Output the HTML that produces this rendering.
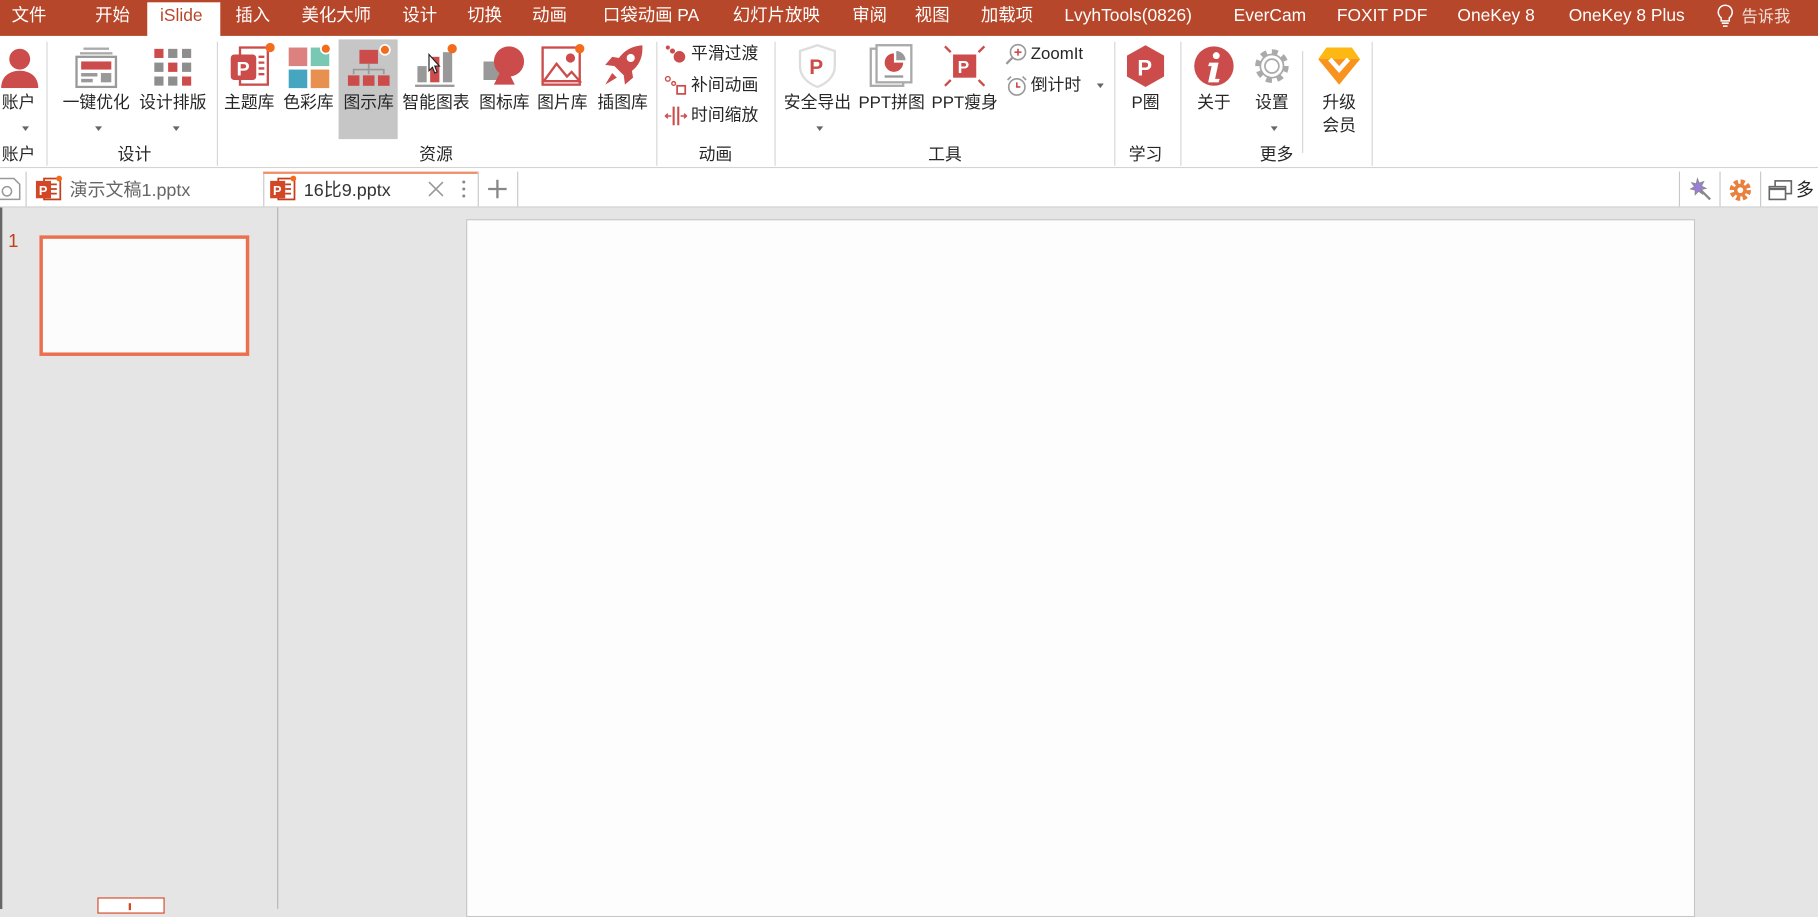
<!DOCTYPE html>
<html><head><meta charset="utf-8"><style>
html,body{margin:0;padding:0;width:1818px;height:909px;overflow:hidden;background:#e5e5e5}
#w{position:absolute;left:0;top:0;width:1568px;height:784px;transform:scale(1.15944,1.15944);transform-origin:0 0;font-family:"Liberation Sans","Noto Sans CJK SC",sans-serif;color:#262626}
.a{position:absolute}
.tab{position:absolute;top:4px;color:#fff;font-size:15px;line-height:20px;white-space:nowrap}
.lbl{position:absolute;font-size:14.5px;line-height:18px;white-space:nowrap;transform:translateX(-50%);text-align:center}
.sep{position:absolute;top:36px;height:107px;width:1px;background:#d6d6d6}
.arr{position:absolute;width:0;height:0;border-left:3.5px solid transparent;border-right:3.5px solid transparent;border-top:4px solid #666;transform:translateX(-50%)}
.sm{position:absolute;font-size:14.5px;line-height:18px;white-space:nowrap}
.vl{position:absolute;width:1px;background:#c8c8c8}
</style></head><body><div id="w">
<div class="a" style="left:0;top:0;width:1568px;height:31px;background:#b7472a"></div>
<div class="a" style="left:127px;top:2px;width:63px;height:30px;background:#fff"></div>
<div class="tab" style="left:10px">文件</div>
<div class="tab" style="left:82px">开始</div>
<div class="tab" style="left:138px;color:#b7472a">iSlide</div>
<div class="tab" style="left:203px">插入</div>
<div class="tab" style="left:260px">美化大师</div>
<div class="tab" style="left:347px">设计</div>
<div class="tab" style="left:403px">切换</div>
<div class="tab" style="left:459px">动画</div>
<div class="tab" style="left:520px">口袋动画 PA</div>
<div class="tab" style="left:632px">幻灯片放映</div>
<div class="tab" style="left:735px">审阅</div>
<div class="tab" style="left:789px">视图</div>
<div class="tab" style="left:846px">加载项</div>
<div class="tab" style="left:918px">LvyhTools(0826)</div>
<div class="tab" style="left:1064px">EverCam</div>
<div class="tab" style="left:1153px">FOXIT PDF</div>
<div class="tab" style="left:1257px">OneKey 8</div>
<div class="tab" style="left:1353px">OneKey 8 Plus</div>
<svg class="a" style="left:1479px;top:3px" width="18" height="22" viewBox="0 0 18 22"><path d="M9 1.5a6 6 0 0 0-3.5 10.9V15h7v-2.6A6 6 0 0 0 9 1.5z" fill="none" stroke="#fff" stroke-width="1.3"/><path d="M6 17h6M7 19.5h4" stroke="#fff" stroke-width="1.3"/></svg>
<div class="tab" style="left:1502px;font-size:14px;color:#f1e0da">告诉我</div>

<div class="a" style="left:0;top:31px;width:1568px;height:113px;background:#fff;border-bottom:1px solid #d4d4d4"></div>
<div class="a" style="left:292px;top:34px;width:51px;height:86px;background:#c6c6c6"></div>

<svg class="a" style="left:0;top:40px" width="34" height="36" viewBox="0 0 34 36"><circle cx="17" cy="11" r="9" fill="#cc4b4b"/><path d="M1 36c0-10 7-15 16-15s16 5 16 15z" fill="#cc4b4b"/></svg>
<div class="lbl" style="left:16px;top:80px">账户</div><div class="arr" style="left:22px;top:109px"></div>
<div class="lbl" style="left:16px;top:125px">账户</div>
<div class="sep" style="left:40px"></div>
<svg class="a" style="left:64px;top:40px" width="38" height="36" viewBox="0 0 38 36"><rect x="8" y="1" width="22" height="2" fill="#aaa"/><rect x="5" y="5" width="28" height="2" fill="#aaa"/><rect x="2" y="9" width="34" height="26" fill="#fff" stroke="#999" stroke-width="2"/><rect x="6" y="13" width="26" height="7" fill="#cc4b4b"/><rect x="6" y="23" width="14" height="3" fill="#999"/><rect x="6" y="28" width="10" height="3" fill="#999"/><rect x="23" y="23" width="9" height="8" fill="#999"/></svg>
<div class="lbl" style="left:83px;top:80px">一键优化</div><div class="arr" style="left:85px;top:109px"></div>
<svg class="a" style="left:133px;top:42px" width="32" height="32" viewBox="0 0 32 32"><g fill="#8e8e8e"><rect x="0" y="0" width="8" height="8" fill="#cc4b4b"/><rect x="12" y="0" width="8" height="8"/><rect x="24" y="0" width="8" height="8"/><rect x="0" y="12" width="8" height="8"/><rect x="12" y="12" width="8" height="8" fill="#cc4b4b"/><rect x="24" y="12" width="8" height="8"/><rect x="0" y="24" width="8" height="8"/><rect x="12" y="24" width="8" height="8"/><rect x="24" y="24" width="8" height="8" fill="#cc4b4b"/></g></svg>
<div class="lbl" style="left:149px;top:80px">设计排版</div><div class="arr" style="left:152px;top:109px"></div>
<div class="lbl" style="left:116px;top:125px">设计</div>
<div class="sep" style="left:187px"></div>
<svg class="a" style="left:197px;top:37px" width="40" height="40" viewBox="0 0 40 40"><rect x="10" y="4" width="24" height="32" fill="#fff" stroke="#cc4b4b" stroke-width="2"/><path d="M26 12h5M26 17h5M26 22h5M26 27h5" stroke="#cc4b4b" stroke-width="2"/><rect x="2" y="10" width="22" height="22" rx="3" fill="#cc4b4b"/><text x="7" y="28" font-size="17" font-weight="bold" fill="#fff" font-family="Liberation Sans">P</text><circle cx="36" cy="4" r="4" fill="#f36b1c"/></svg>
<div class="lbl" style="left:215px;top:80px">主题库</div>
<svg class="a" style="left:248px;top:37px" width="40" height="40" viewBox="0 0 40 40"><rect x="1" y="4" width="16" height="16" fill="#dd8080"/><rect x="20" y="4" width="16" height="16" fill="#78c8b4"/><rect x="1" y="23" width="16" height="16" fill="#46a6bf"/><rect x="20" y="23" width="16" height="16" fill="#e8904f"/><circle cx="33" cy="5" r="5" fill="#fff"/><circle cx="33" cy="5" r="3.5" fill="#f36b1c"/></svg>
<div class="lbl" style="left:266px;top:80px">色彩库</div>
<svg class="a" style="left:300px;top:37px" width="40" height="40" viewBox="0 0 40 40"><rect x="10" y="6" width="16" height="12" fill="#cc4b4b"/><path d="M18 18v5M5 27v-4h26v4M18 23v4" stroke="#999" stroke-width="1.5" fill="none"/><rect x="0" y="28" width="10" height="9" fill="#cc4b4b"/><rect x="13" y="28" width="10" height="9" fill="#cc4b4b"/><rect x="26" y="28" width="10" height="9" fill="#cc4b4b"/><circle cx="32" cy="6" r="5" fill="#fff"/><circle cx="32" cy="6" r="3.5" fill="#f36b1c"/></svg>
<div class="lbl" style="left:318px;top:80px">图示库</div>
<svg class="a" style="left:356px;top:37px" width="40" height="40" viewBox="0 0 40 40"><rect x="4" y="20" width="8" height="14" fill="#999"/><rect x="15" y="12" width="8" height="22" fill="#cc4b4b"/><rect x="26" y="8" width="8" height="26" fill="#999"/><rect x="2" y="36" width="34" height="2" fill="#999"/><circle cx="34" cy="5" r="4" fill="#f36b1c"/><path d="M14 10v14l3-3 2 5 2-1-2-5h4z" fill="#fff" stroke="#222" stroke-width="1"/></svg>
<div class="lbl" style="left:376px;top:80px">智能图表</div>
<svg class="a" style="left:415px;top:37px" width="40" height="40" viewBox="0 0 40 40"><path d="M2 16h20v16H2z" fill="#999"/><circle cx="24" cy="16" r="13" fill="#cc4b4b"/><path d="M20 18l9 18H11z" fill="#cc4b4b"/></svg>
<div class="lbl" style="left:435px;top:80px">图标库</div>
<svg class="a" style="left:466px;top:37px" width="40" height="40" viewBox="0 0 40 40"><rect x="2" y="4" width="32" height="32" fill="#fff" stroke="#cc4b4b" stroke-width="2"/><path d="M3 33l11-15 9 11 4-4 7 8z" fill="none" stroke="#cc4b4b" stroke-width="2"/><circle cx="26" cy="13" r="4" fill="#cc4b4b"/><circle cx="34" cy="5" r="4" fill="#f36b1c"/></svg>
<div class="lbl" style="left:485px;top:80px">图片库</div>
<svg class="a" style="left:518px;top:37px" width="40" height="40" viewBox="0 0 40 40"><path d="M36 2C24 3 16 10 12 20l8 8c10-4 17-12 16-26z" fill="#cc4b4b"/><circle cx="26" cy="13" r="3.5" fill="#fff"/><path d="M12 20l-8-1 6-7 6 1zM20 28l1 8 7-6-1-6z" fill="#cc4b4b"/><path d="M10 26l-6 10 10-6z" fill="#cc4b4b"/></svg>
<div class="lbl" style="left:537px;top:80px">插图库</div>
<div class="lbl" style="left:376px;top:125px">资源</div>
<div class="sep" style="left:566px"></div>
<svg class="a" style="left:573px;top:38px" width="20" height="18" viewBox="0 0 20 18"><circle cx="3" cy="3" r="1.8" fill="#cc4b4b"/><circle cx="7" cy="6" r="2.2" fill="#cc4b4b"/><circle cx="13" cy="11" r="5" fill="#cc4b4b"/></svg>
<div class="sm" style="left:596px;top:38px">平滑过渡</div>
<svg class="a" style="left:573px;top:65px" width="20" height="18" viewBox="0 0 20 18"><circle cx="3" cy="3" r="2" fill="none" stroke="#cc4b4b" stroke-width="1.2"/><circle cx="8" cy="7" r="1.6" fill="none" stroke="#cc4b4b" stroke-width="1.2"/><rect x="11" y="9" width="7" height="7" fill="none" stroke="#cc4b4b" stroke-width="1.5"/></svg>
<div class="sm" style="left:596px;top:65px">补间动画</div>
<svg class="a" style="left:573px;top:91px" width="20" height="18" viewBox="0 0 20 18"><path d="M8 1v16M12 1v16" stroke="#cc4b4b" stroke-width="1.8"/><path d="M1 9h5M14 9h5M3 7l-2 2 2 2M17 7l2 2-2 2" stroke="#cc4b4b" stroke-width="1.3" fill="none"/></svg>
<div class="sm" style="left:596px;top:91px">时间缩放</div>
<div class="lbl" style="left:617px;top:125px">动画</div>
<div class="sep" style="left:668px"></div>
<svg class="a" style="left:687px;top:37px" width="36" height="40" viewBox="0 0 36 40"><path d="M18 2l15 5v13c0 9-7 15-15 18C10 35 3 29 3 20V7z" fill="#fff" stroke="#ddd" stroke-width="2"/><text x="11" y="27" font-size="18" font-weight="bold" fill="#cc4b4b" font-family="Liberation Sans">P</text></svg>
<div class="lbl" style="left:705px;top:80px">安全导出</div><div class="arr" style="left:707px;top:109px"></div>
<svg class="a" style="left:750px;top:38px" width="38" height="38" viewBox="0 0 38 38"><rect x="1" y="4" width="28" height="32" fill="#fff" stroke="#aaa" stroke-width="2"/><rect x="6" y="1" width="30" height="32" fill="#fff" stroke="#aaa" stroke-width="2"/><path d="M21 8a8 8 0 1 0 8 8h-8z" fill="#cc4b4b"/><path d="M23 6v8h8a8 8 0 0 0-8-8z" fill="#999"/><rect x="13" y="27" width="16" height="2" fill="#999"/></svg>
<div class="lbl" style="left:769px;top:80px">PPT拼图</div>
<svg class="a" style="left:813px;top:38px" width="38" height="38" viewBox="0 0 38 38"><rect x="9" y="9" width="20" height="20" fill="#cc4b4b"/><text x="13" y="25" font-size="15" font-weight="bold" fill="#fff" font-family="Liberation Sans">P</text><path d="M2 2l5 5M36 2l-5 5M2 36l5-5M36 36l-5-5" stroke="#cc4b4b" stroke-width="2"/></svg>
<div class="lbl" style="left:832px;top:80px">PPT瘦身</div>
<svg class="a" style="left:867px;top:37px" width="20" height="20" viewBox="0 0 20 20"><circle cx="11" cy="8" r="6.5" fill="none" stroke="#999" stroke-width="1.4"/><path d="M11 5v6M8 8h6" stroke="#cc4b4b" stroke-width="1.4"/><path d="M6 13l-5 5" stroke="#999" stroke-width="2"/></svg>
<div class="sm" style="left:889px;top:38px">ZoomIt</div>
<svg class="a" style="left:867px;top:64px" width="20" height="20" viewBox="0 0 20 20"><circle cx="10" cy="11" r="7" fill="none" stroke="#999" stroke-width="1.4"/><path d="M10 7v4h3" stroke="#cc4b4b" stroke-width="1.4" fill="none"/><path d="M2 5l3-3M18 5l-3-3" stroke="#999" stroke-width="1.4"/></svg>
<div class="sm" style="left:889px;top:65px">倒计时</div><div class="arr" style="left:949px;top:72px"></div>
<div class="lbl" style="left:815px;top:125px">工具</div>
<div class="sep" style="left:961px"></div>
<svg class="a" style="left:970px;top:38px" width="36" height="38" viewBox="0 0 36 38"><path d="M18 1l16 9v18l-16 9-16-9V10z" fill="#cc4b4b"/><text x="11" y="27" font-size="19" font-weight="bold" fill="#fff" font-family="Liberation Sans">P</text></svg>
<div class="lbl" style="left:988px;top:80px">P圈</div>
<div class="lbl" style="left:988px;top:125px">学习</div>
<div class="sep" style="left:1018px"></div>
<svg class="a" style="left:1029px;top:38px" width="36" height="38" viewBox="0 0 36 38"><circle cx="18" cy="19" r="17" fill="#cc4b4b"/><circle cx="20" cy="10" r="3" fill="#fff"/><path d="M14 16h8l-3 14h4l-1 3h-9l3-14h-3z" fill="#fff"/></svg>
<div class="lbl" style="left:1047px;top:80px">关于</div>
<svg class="a" style="left:1079px;top:38px" width="36" height="38" viewBox="0 0 36 38"><circle cx="18" cy="19" r="12" fill="none" stroke="#aaa" stroke-width="5" stroke-dasharray="5 4.4"/><circle cx="18" cy="19" r="10" fill="none" stroke="#aaa" stroke-width="1.5"/><circle cx="18" cy="19" r="6" fill="none" stroke="#aaa" stroke-width="1.5"/></svg>
<div class="lbl" style="left:1097px;top:80px">设置</div><div class="arr" style="left:1099px;top:109px"></div>
<div class="lbl" style="left:1101px;top:125px">更多</div>
<div class="a" style="left:1123px;top:44px;width:1px;height:88px;background:#d6d6d6"></div>
<svg class="a" style="left:1136px;top:40px" width="38" height="34" viewBox="0 0 38 34"><path d="M8 1h22l7 10-18 22L1 11z" fill="#fdb813"/><path d="M19 33L1 11h36z" fill="#f7931e"/><path d="M11 11l8 9 8-9" stroke="#fff" stroke-width="4" fill="none"/></svg>
<div class="lbl" style="left:1155px;top:80px">升级</div>
<div class="lbl" style="left:1155px;top:100px">会员</div>
<div class="sep" style="left:1183px"></div>

<div class="a" style="left:0;top:145px;width:1568px;height:33px;background:#fff;border-bottom:1px solid #cfcfcf"></div>
<div class="vl" style="left:22px;top:148px;height:30px"></div>
<div class="vl" style="left:227px;top:148px;height:30px"></div>
<div class="a" style="left:227px;top:148px;width:185px;height:2px;background:#ed8f68"></div>
<div class="vl" style="left:412px;top:148px;height:30px"></div>
<div class="vl" style="left:446px;top:148px;height:30px"></div>
<div class="vl" style="left:1448px;top:148px;height:30px"></div>
<div class="vl" style="left:1483px;top:148px;height:30px"></div>
<div class="vl" style="left:1518px;top:148px;height:30px"></div>
<svg class="a" style="left:0;top:153px" width="18" height="20" viewBox="0 0 18 20"><path d="M0 1h12l5 5v13H0" fill="#fff" stroke="#999" stroke-width="1.3"/><circle cx="6" cy="12" r="4" fill="none" stroke="#999" stroke-width="1.3"/></svg>
<svg class="a" style="left:30px;top:151px" width="24" height="24" viewBox="0 0 24 24"><rect x="8" y="3" width="14" height="18" fill="#fff" stroke="#c43e1c" stroke-width="1.5"/><path d="M14 8h5M14 12h5M14 16h5" stroke="#c43e1c" stroke-width="1.5"/><rect x="1" y="5" width="13" height="15" fill="#d24726"/><text x="3.5" y="17" font-size="11" font-weight="bold" fill="#fff" font-family="Liberation Sans">P</text><circle cx="21" cy="3" r="2.5" fill="#f36b1c"/></svg>
<div class="a" style="left:60px;top:152px;font-size:15.5px;color:#666">演示文稿1.pptx</div>
<svg class="a" style="left:232px;top:151px" width="24" height="24" viewBox="0 0 24 24"><rect x="8" y="3" width="14" height="18" fill="#fff" stroke="#c43e1c" stroke-width="1.5"/><path d="M14 8h5M14 12h5M14 16h5" stroke="#c43e1c" stroke-width="1.5"/><rect x="1" y="5" width="13" height="15" fill="#d24726"/><text x="3.5" y="17" font-size="11" font-weight="bold" fill="#fff" font-family="Liberation Sans">P</text><circle cx="21" cy="3" r="2.5" fill="#f36b1c"/></svg>
<div class="a" style="left:262px;top:152px;font-size:15.5px;color:#333">16比9.pptx</div>
<svg class="a" style="left:369px;top:156px" width="14" height="14" viewBox="0 0 14 14"><path d="M1 1l12 12M13 1L1 13" stroke="#999" stroke-width="1.4"/></svg>
<svg class="a" style="left:398px;top:155px" width="4" height="16" viewBox="0 0 4 16"><circle cx="2" cy="2" r="1.3" fill="#888"/><circle cx="2" cy="8" r="1.3" fill="#888"/><circle cx="2" cy="14" r="1.3" fill="#888"/></svg>
<svg class="a" style="left:420px;top:154px" width="18" height="18" viewBox="0 0 18 18"><path d="M9 1v16M1 9h16" stroke="#888" stroke-width="2"/></svg>
<svg class="a" style="left:1455px;top:152px" width="22" height="22" viewBox="0 0 22 22"><path d="M9 2l1.5 4 4-1.5-2 4 4 2-4 1 1 4-3.5-2.5L7 16l0-4-4-1 3.5-2L4 5.5l4 1z" fill="#9b7fd6" stroke="#888" stroke-width=".7"/><path d="M12 12l8 8" stroke="#888" stroke-width="2"/></svg>
<svg class="a" style="left:1491px;top:154px" width="20" height="20" viewBox="0 0 20 20"><circle cx="10" cy="10" r="7" fill="none" stroke="#e8803e" stroke-width="4.5" stroke-dasharray="3.4 2.1"/><circle cx="10" cy="10" r="5.5" fill="#e8803e"/><circle cx="10" cy="10" r="2.5" fill="#fff"/></svg>
<svg class="a" style="left:1525px;top:155px" width="22" height="18" viewBox="0 0 22 18"><rect x="6" y="1" width="14" height="11" fill="none" stroke="#666" stroke-width="1.4"/><rect x="1" y="6" width="14" height="11" fill="#fff" stroke="#666" stroke-width="1.4"/><path d="M1 8h14" stroke="#666" stroke-width="2"/></svg>
<div class="a" style="left:1549px;top:152px;font-size:15.5px">多</div>

<div class="a" style="left:0;top:179px;width:2px;height:605px;background:#666"></div>
<div class="a" style="left:239px;top:179px;width:1px;height:605px;background:#b5b5b5"></div>
<div class="a" style="left:7px;top:200px;font-size:16px;color:#c43e1c">1</div>
<div class="a" style="left:34px;top:203px;width:175px;height:98px;border:3px solid #ea7050;background:#fcfcfc"></div>
<div class="a" style="left:402px;top:189px;width:1058px;height:600px;border:1px solid #c6c6c6;background:#fdfdfd"></div>
<div class="a" style="left:84px;top:774px;width:56px;height:12px;border:1px solid #d24726;background:#fff"></div>
<div class="a" style="left:111px;top:779px;width:2px;height:6px;background:#d24726"></div>
</div></body></html>
